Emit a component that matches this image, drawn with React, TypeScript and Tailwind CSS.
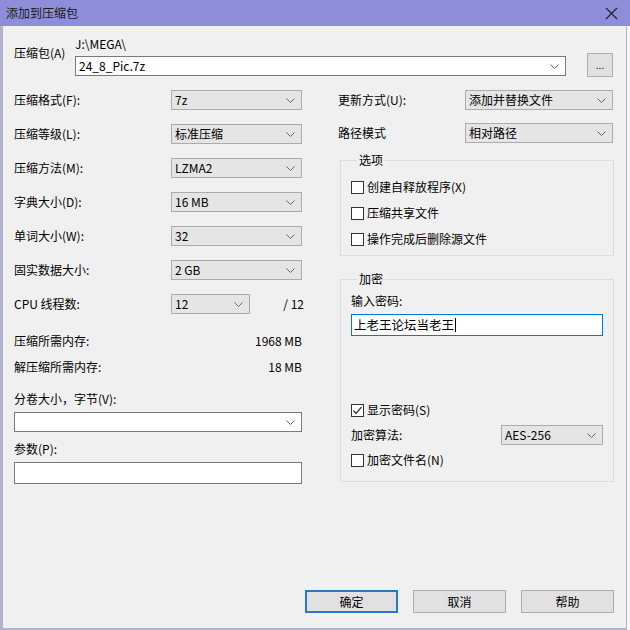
import type { ReactNode } from "react";

const font = { fontFamily: '"Noto Sans CJK SC", "Noto Sans", sans-serif' };

function Chevron() {
  return (
    <svg width="9" height="5" viewBox="0 0 9 5" fill="none" className="shrink-0">
      <path d="M0.5 0.5L4.5 4.5L8.5 0.5" stroke="#666" strokeWidth="1" />
    </svg>
  );
}

function Combo({ value, className, white }: { value?: string; className: string; white?: boolean }) {
  return (
    <div
      className={`flex h-[20px] items-center justify-between pl-[3px] pr-[6px] border ${
        white ? "bg-white border-[#7a7a7a]" : "bg-[#e5e5e5] border-[#acacac]"
      } ${className}`}
    >
      <span>{value}</span>
      <Chevron />
    </div>
  );
}

function Check({ checked, children }: { checked?: boolean; children: ReactNode }) {
  return (
    <div className="flex items-center gap-[3px] h-[26px]">
      <span className="w-[13px] h-[13px] border border-[#333] bg-white flex items-center justify-center">
        {checked && (
          <svg width="11" height="11" viewBox="0 0 11 11" fill="none">
            <path d="M1.5 5.5L4 8.5L9.5 2" stroke="#333" strokeWidth="1.2" />
          </svg>
        )}
      </span>
      <span>{children}</span>
    </div>
  );
}

function Row({ label, children }: { label: string; children: ReactNode }) {
  return (
    <div className="flex items-center h-[34px]">
      <span className="w-[157px] shrink-0">{label}</span>
      {children}
    </div>
  );
}

function Button({ label, primary }: { label: string; primary?: boolean }) {
  return (
    <div
      className={`w-[93px] h-[23px] flex items-center justify-center bg-[#e1e1e1] ${
        primary ? "border-2 border-[#2a78c4]" : "border border-[#adadad]"
      }`}
    >
      {label}
    </div>
  );
}

export default function App() {
  return (
    <div className="w-[630px] h-[630px] bg-[#f7f7f9] text-[12px] leading-[16px] text-black" style={font}>
      <div className="h-[26px] bg-[#8d8dda] flex items-center justify-between pl-[6px] pr-[12px]">
        <span className="text-[12px] text-[#1a1a1a]">添加到压缩包</span>
        <svg width="13" height="13" viewBox="0 0 13 13" fill="none">
          <path d="M1 1L12 12M12 1L1 12" stroke="#222" strokeWidth="1.1" />
        </svg>
      </div>

      <div className="w-[627px] h-[604px] bg-[#f0f0f0] border-l-[3px] border-r border-b-2 border-[#b2b2cc] pl-[11px] pr-[12px] flex flex-col">
        {/* archive path */}
        <div className="flex pt-[10px]">
          <span className="w-[61px] shrink-0 mt-[9px]">压缩包(A)</span>
          <div className="flex flex-col">
            <span className="h-[16px]">J:\MEGA\</span>
            <Combo value="24_8_Pic.7z" white className="mt-[4px] w-[491px]" />
          </div>
          <div className="ml-[21px] mt-[17px] w-[26px] h-[24px] bg-[#e1e1e1] border border-[#adadad] flex items-center justify-center text-[10px]">
            ...
          </div>
        </div>

        <div className="flex mt-[6px]">
          {/* left column */}
          <div className="w-[288px] flex flex-col">
            <Row label="压缩格式(F):">
              <Combo value="7z" className="w-[131px]" />
            </Row>
            <Row label="压缩等级(L):">
              <Combo value="标准压缩" className="w-[131px]" />
            </Row>
            <Row label="压缩方法(M):">
              <Combo value="LZMA2" className="w-[131px]" />
            </Row>
            <Row label="字典大小(D):">
              <Combo value="16 MB" className="w-[131px]" />
            </Row>
            <Row label="单词大小(W):">
              <Combo value="32" className="w-[131px]" />
            </Row>
            <Row label="固实数据大小:">
              <Combo value="2 GB" className="w-[131px]" />
            </Row>
            <Row label="CPU 线程数:">
              <Combo value="12" className="w-[79px]" />
              <span className="ml-auto mr-[-2px]">/ 12</span>
            </Row>
            <div className="flex justify-between items-center h-[26px] mt-[7px]">
              <span>压缩所需内存:</span>
              <span>1968 MB</span>
            </div>
            <div className="flex justify-between items-center h-[26px]">
              <span>解压缩所需内存:</span>
              <span>18 MB</span>
            </div>
            <span className="mt-[11px] h-[16px]">分卷大小，字节(V):</span>
            <Combo white className="mt-[5px] w-[288px]" />
            <span className="mt-[9px] h-[16px]">参数(P):</span>
            <div className="mt-[5px] h-[22px] w-[288px] bg-white border border-[#7a7a7a]" />
          </div>

          {/* right column */}
          <div className="ml-[36px] w-[276px] flex flex-col">
            <div className="flex items-center h-[34px]">
              <span className="w-[127px] shrink-0">更新方式(U):</span>
              <Combo value="添加并替换文件" className="w-[148px]" />
            </div>
            <div className="flex items-center h-[32px]">
              <span className="w-[127px] shrink-0">路径模式</span>
              <Combo value="相对路径" className="w-[148px]" />
            </div>

            <fieldset className="ml-[2px] mt-[3px] w-[274px] border border-[#dcdcdc] pl-[10px] pr-[10px] pb-[3px]">
              <legend className="ml-[6px] px-[2px] leading-[16px]">选项</legend>
              <div className="mt-[6px]">
                <Check>创建自释放程序(X)</Check>
                <Check>压缩共享文件</Check>
                <Check>操作完成后删除源文件</Check>
              </div>
            </fieldset>

            <fieldset className="ml-[2px] mt-[15px] w-[274px] border border-[#dcdcdc] pl-[10px] pr-[10px] pb-[8px]">
              <legend className="ml-[6px] px-[2px] leading-[16px]">加密</legend>
              <div className="flex flex-col">
                <span className="mt-[6px] h-[16px]">输入密码:</span>
                <div className="mt-[5px] h-[22px] w-[252px] bg-white border border-[#0078d7] flex items-center pl-[2px] text-[12.5px]">
                  <span>上老王论坛当老王</span>
                  <span className="w-px h-[14px] bg-black ml-[1px]" />
                </div>
                <div className="mt-[61px]">
                  <Check checked>显示密码(S)</Check>
                </div>
                <div className="flex items-center justify-between h-[24px]">
                  <span>加密算法:</span>
                  <Combo value="AES-256" className="w-[102px]" />
                </div>
                <Check>加密文件名(N)</Check>
              </div>
            </fieldset>
          </div>
        </div>

        <div className="flex justify-end gap-[15px] mt-auto mb-[15px]">
          <Button label="确定" primary />
          <Button label="取消" />
          <Button label="帮助" />
        </div>
      </div>
    </div>
  );
}
